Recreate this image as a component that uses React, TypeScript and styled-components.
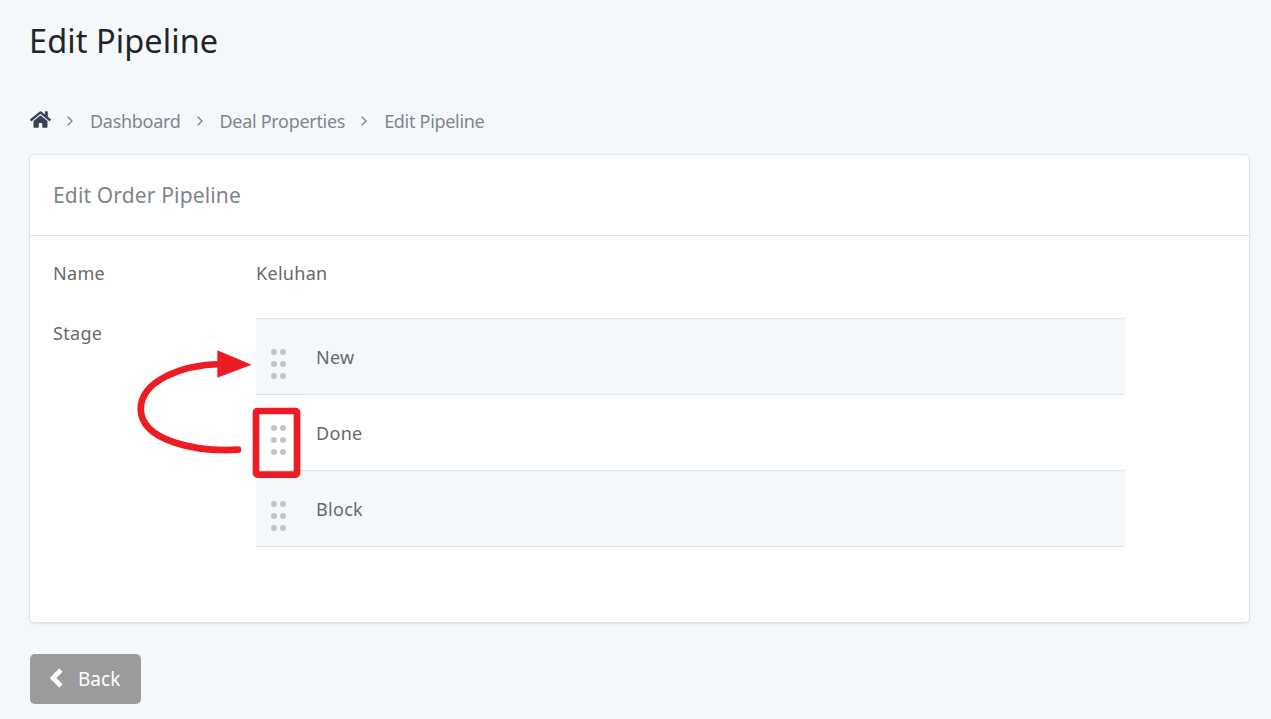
import React from "react";
import styled, { createGlobalStyle } from "styled-components";
import { FaHome } from "react-icons/fa";
import { ChevronRight } from "lucide-react";

const Global = createGlobalStyle`
  html, body {
    margin: 0;
    background: #f5f8fb;
    font-family: "Noto Sans", "Open Sans", sans-serif;
  }
`;
const Page = styled.div`
  height: 719px;
  box-sizing: border-box;
  padding: 20px 21px 0 29px;
  overflow: hidden;
`;
const Title = styled.h1`
  margin: 0;
  font-size: 32.5px;
  line-height: 42px;
  font-weight: 400;
  color: #212529;
  letter-spacing: 0.08px;
`;
const Crumbs = styled.nav`
  display: flex;
  align-items: center;
  height: 24px;
  margin-top: 47px;
  font-size: 18px;
  color: #7f8490;
  letter-spacing: -0.3px;
`;
const HomeIcon = styled(FaHome)`
  width: 21px;
  height: 21px;
  color: #3b4256;
  margin: -3px 0.5px 0 0.5px;
`;
const Sep = styled(ChevronRight)`
  width: 16px;
  height: 16px;
  margin: 0 12px 0 11px;
  color: #7f8490;
`;
const Card = styled.section`
  margin-top: 21px;
  height: 469px;
  box-sizing: border-box;
  background: #fff;
  border: 1px solid #dfe2e6;
  border-radius: 5px;
  box-shadow: 0 1px 2px rgba(0, 0, 0, 0.08);
`;
const CardHeader = styled.header`
  height: 81px;
  box-sizing: border-box;
  padding: 0 23px;
  display: flex;
  align-items: center;
  border-bottom: 1px solid #dfe2e6;
  font-size: 21px;
  color: #7f8490;
  letter-spacing: 0.15px;
`;
const CardBody = styled.div`
  padding: 20px 124px 0 23px;
  display: grid;
  grid-template-columns: 203px 1fr;
  row-gap: 26px;
  font-size: 18px;
  color: #666a6e;
  letter-spacing: 0.3px;
`;
const Label = styled.div`
  line-height: 34px;
`;
const Value = styled.div`
  line-height: 34px;
`;
const StageField = styled.div`
  position: relative;
  border-top: 1px solid #dfe2e6;
  margin-top: 2px;
`;
const StageRow = styled.div<{ $shaded?: boolean }>`
  height: 75px;
  display: flex;
  align-items: center;
  gap: 30px;
  padding-left: 15px;
  border-bottom: 1px solid #dfe2e6;
  background: ${(p) => (p.$shaded ? "#f5f8fb" : "#fff")};
`;
const Handle = styled.svg`
  width: 15px;
  height: 30px;
  flex: none;
  margin-top: 14px;
  fill: #c4c4c4;
`;
const Annotation = styled.svg`
  position: absolute;
  left: -120px;
  top: 0;
  overflow: visible;
  pointer-events: none;
`;
const BackButton = styled.button`
  margin: 31px 0 0 1px;
  width: 111px;
  height: 50px;
  padding: 0 0 0 20px;
  display: flex;
  align-items: center;
  gap: 15px;
  border: 0;
  border-radius: 5px;
  background: #9b9b9b;
  color: #fff;
  font-family: inherit;
  font-size: 19px;
`;
const BackIcon = styled.svg`
  width: 13px;
  height: 20px;
  fill: none;
  stroke: #fff;
  stroke-width: 4.6;
  margin-top: -3px;
`;

const DragHandle = () => (
  <Handle viewBox="0 0 15 30">
    {[3, 15, 27].map((y) =>
      [3, 12].map((x) => <circle key={`${x}-${y}`} cx={x} cy={y} r={3} />)
    )}
  </Handle>
);

const stages = [
  { name: "New", shaded: true },
  { name: "Done", shaded: false },
  { name: "Block", shaded: true },
];

export default function App() {
  return (
    <Page>
      <Global />
      <Title>Edit Pipeline</Title>
      <Crumbs>
        <HomeIcon />
        <Sep />
        Dashboard
        <Sep />
        Deal Properties
        <Sep />
        Edit Pipeline
      </Crumbs>
      <Card>
        <CardHeader>Edit Order Pipeline</CardHeader>
        <CardBody>
          <Label>Name</Label>
          <Value>Keluhan</Value>
          <Label>Stage</Label>
          <StageField>
            {stages.map((s) => (
              <StageRow key={s.name} $shaded={s.shaded}>
                <DragHandle />
                {s.name}
              </StageRow>
            ))}
            <Annotation width="170" height="170" viewBox="0 0 170 170">
              <path
                d="M102 130.7 C 60 133 5 122 4.7 90 C 5 62 45 46 85 45"
                fill="none"
                stroke="#ed1c24"
                strokeWidth="6.7"
                strokeLinecap="round"
              />
              <polygon points="81.3,31.3 115.7,45.7 81.3,58.7" fill="#ed1c24" />
              <rect
                x="120"
                y="92"
                width="41"
                height="63.6"
                rx="1.5"
                fill="none"
                stroke="#ed1c24"
                strokeWidth="6.7"
              />
            </Annotation>
          </StageField>
        </CardBody>
      </Card>
      <BackButton>
        <BackIcon viewBox="0 0 13 20">
          <polyline points="11,2 3,10 11,18" />
        </BackIcon>
        Back
      </BackButton>
    </Page>
  );
}
